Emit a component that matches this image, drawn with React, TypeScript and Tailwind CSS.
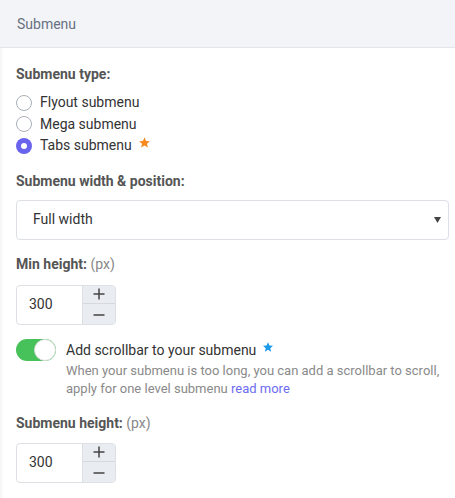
import { useState } from "react"

const StarIcon = ({ className }: { className?: string }) => (
  <svg viewBox="0 0 24 24" className={className} fill="currentColor">
    <path d="M12 2.5l2.9 6.6 7.1.6-5.4 4.7 1.6 7-6.2-3.7-6.2 3.7 1.6-7L2 9.7l7.1-.6z" />
  </svg>
)

function NumberField({ value }: { value: number }) {
  return (
    <div className="flex h-[40px] w-[100px] overflow-hidden rounded border border-[#dcdfe4]">
      <div className="flex flex-1 items-center pl-[12px] text-[14px] text-[#333]">{value}</div>
      <div className="flex w-[33px] flex-col border-l border-[#dcdfe4] bg-[#e9ecf0] text-[#444]">
        <button className="flex flex-1 items-center justify-center border-b border-[#d5d8dd]">
          <svg viewBox="0 0 12 12" className="h-[12px] w-[12px]" stroke="currentColor" strokeWidth="1.5">
            <path d="M6 0.5v11M0.5 6h11" />
          </svg>
        </button>
        <button className="flex flex-1 items-center justify-center pt-[3px]">
          <svg viewBox="0 0 12 12" className="h-[12px] w-[12px]" stroke="currentColor" strokeWidth="1.5">
            <path d="M0.5 6h11" />
          </svg>
        </button>
      </div>
    </div>
  )
}

function Radio({ label, checked, star }: { label: string; checked?: boolean; star?: boolean }) {
  return (
    <label className="flex h-[21.5px] items-center">
      {checked ? (
        <span className="flex h-[16px] w-[16px] items-center justify-center rounded-full bg-[#6a63ee]">
          <span className="h-[6px] w-[6px] rounded-full bg-white" />
        </span>
      ) : (
        <span className="h-[16px] w-[16px] rounded-full border border-[#aab0b8] bg-white" />
      )}
      <span className="ml-[8px] text-[14px] text-[#333]">{label}</span>
      {star && <StarIcon className="mb-[7px] ml-[6px] h-[13px] w-[13px] text-[#f58a1f]" />}
    </label>
  )
}

export default function App() {
  const [scroll] = useState(true)

  return (
    <div
      className="h-[498px] w-[455px] overflow-hidden bg-white shadow-[inset_4px_0_4px_-3px_rgba(0,0,0,0.07)]"
      style={{ fontFamily: "Roboto, 'Liberation Sans', sans-serif" }}
    >
      <div className="flex h-[48px] items-center border-b border-[#e3e5ea] bg-[#f3f4f8] px-[17px] pt-[2px] text-[14px] text-[#66717f]">
        Submenu
      </div>

      <div className="pl-[16px] pr-[6px]">
        <div className="mt-[16px] text-[14px] font-bold text-[#555]">Submenu type:</div>
        <div className="mt-[7px] flex flex-col">
          <Radio label="Flyout submenu" />
          <Radio label="Mega submenu" />
          <Radio label="Tabs submenu" checked star />
        </div>

        <div className="mt-[14px] text-[14px] font-bold text-[#555]">Submenu width &amp; position:</div>
        <div className="mt-[8px] flex h-[40px] items-center justify-between rounded border border-[#dcdfe4] pl-[16px] pr-[7px] text-[14px] text-[#333]">
          <span>Full width</span>
          <svg viewBox="0 0 7 6" className="h-[6px] w-[7px] text-[#444]" fill="currentColor">
            <path d="M0 0h7L3.5 6z" />
          </svg>
        </div>

        <div className="mt-[14px] text-[14px] text-[#555]">
          <span className="font-bold">Min height:</span> <span className="text-[#888]">(px)</span>
        </div>
        <div className="mt-[10px]">
          <NumberField value={300} />
        </div>

        <div className="mt-[14px] flex">
          <div
            className={`relative h-[22px] w-[40px] shrink-0 rounded-full ${scroll ? "bg-[#47c15a]" : "bg-[#ccc]"}`}
          >
            <span className="absolute right-0 top-0 h-[22px] w-[22px] rounded-full border border-[#d8dcd8] bg-white" />
          </div>
          <div className="ml-[10px]">
            <div className="flex items-start text-[14px] leading-[22px] text-[#333]">
              Add scrollbar to your submenu
              <StarIcon className="ml-[6px] mt-[2px] h-[12px] w-[12px] text-[#1a9ae8]" />
            </div>
            <p className="mt-[1px] text-[13px] leading-[18px] text-[#8a8a8a]">
              When your submenu is too long, you can add a scrollbar to scroll, apply for one level submenu{" "}
              <a className="text-[#6c6cf2]">read more</a>
            </p>
          </div>
        </div>

        <div className="mt-[15px] text-[14px] text-[#555]">
          <span className="font-bold">Submenu height:</span> <span className="text-[#888]">(px)</span>
        </div>
        <div className="mt-[9px]">
          <NumberField value={300} />
        </div>
      </div>
    </div>
  )
}
